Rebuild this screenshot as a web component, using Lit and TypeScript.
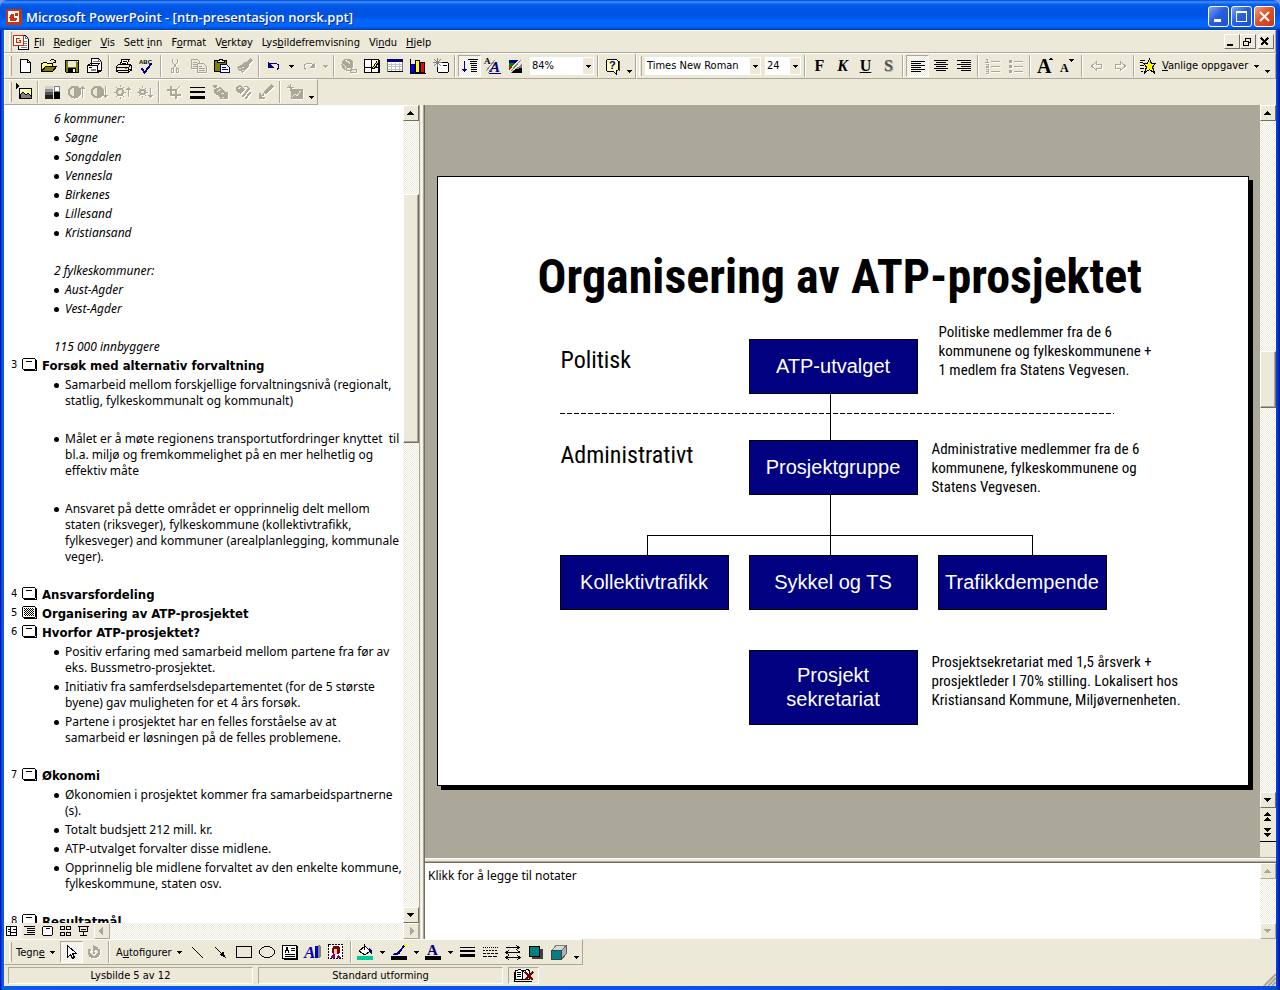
import { LitElement, html, svg, css, TemplateResult } from "lit";
import { customElement } from "lit/decorators.js";

const ink = (d: string, c = "#000", w = 1) =>
  svg`<path d=${d} fill="none" stroke=${c} stroke-width=${w} />`;
const fill = (d: string, c = "#000", s = "none") => svg`<path d=${d} fill=${c} stroke=${s} />`;
const G = "#aca899";

const icons: Record<string, unknown> = {
  newdoc: svg`${fill("M2.500 1.500h7l3 3v10h-10z", "#fff", "#000")}${ink("M9.500 1.500v3h3")}`,
  open: svg`${fill("M.5 13.500v-8h1l1-1h3l1 1h5v3", "#ffff80", "#000")}${fill("M.5 13.500l4-5h11l-4 5z", "#808000", "#000")}${ink("M9 2.500h1M10 1.500h3M13 2.500h1M12 4.500h3M14.500 2v3")}`,
  save: svg`${fill("M1.500 2.500h13v12h-12l-1-1z", "#808000", "#000")}${fill("M4 3h8v6h-8z", "#ece9d8")}${fill("M4 10h8v4h-8z")}${fill("M9 11h2v3h-2z", "#fff")}${fill("M13 3h1v1h-1z", "#fff")}`,
  mail: svg`${fill("M4.500 7v-6.500h7l3 3v9h-4", "#fff", "#000")}${ink("M6 3.500h5M6 5.500h7M11.500 .5v3h3", "#808080")}${fill("M.5 7.500h10v7h-10z", "#fff", "#000")}${ink("M.5 7.500l3-2h9l-2 2M10.500 14.500l4-2v-4")}${ink("M2 9.500h3", "#000")}${fill("M4 11h5v2h-5z", "#808080")}`,
  print: svg`${fill("M4.500 6l1.500-4.500h7l-2 5z", "#fff", "#000")}${ink("M7 3.500h4M6 5.500h4")}${fill("M.5 8.500l3-2.500h11l1 2v4l-3 2.500h-9.500l-2.500-1.500z", "#ece9d8", "#000")}${ink("M1 9.500h11M1 12.500h11M12.500 9v5M13 8.500l2-2M3 14.500h9")}${fill("M9 10h2v1h-2z", "#808000")}${ink("M13 11.500h2M13 13.500h1")}`,
  spell: svg`<text x="0" y="6" class="tiny">ABC</text>${ink("M2.500 10l3 4.500 7-9", "#000080", 2)}`,
  cut: svg`${ink("M4.500 1v3l5 7M9.500 1v3l-5 7", G)}${ink("M3.500 10.500h2v4h-2zM8.500 10.500h2v4h-2z", G)}`,
  copy: svg`${fill("M.5 1.500h6l2 2v7h-8z", "#ece9d8", G)}${ink("M2 4.500h4M2 6.500h4M2 8.500h4", G)}${fill("M6.500 5.500h6l3 3v6h-9z", "#ece9d8", G)}${ink("M8 8.500h3M8 10.500h6M8 12.500h6", G)}`,
  paste: svg`${fill("M.5 2.500h12v11h-12z", "#808000", "#000")}${fill("M3.500 3.500v-1h1.500l1-1.500h2l1 1.500h1.500v2h-7z", "#ece9d8", "#000")}${fill("M6.500 6.500h6l3 3v5h-9z", "#fff", "#000080")}${ink("M8 9.500h4M8 11.500h6", "#000080")}`,
  brush: svg`${ink("M14.500 1.500l-5 5", G, 3)}${fill("M8 4l4 4-2 3-5-5z", G)}${fill("M0 9l6-3 4 5-5 4-1-2-2 0z", G)}${ink("M2 10.500h2M5 9.500h2M5 12.500h2", "#ece9d8")}`,
  undo: svg`${ink("M4 6.500l2-1.500h4l2.500 2v3l-1.500 1.500", "#000080")}${fill("M2 4v6h6z", "#000080")}`,
  redo: svg`${ink("M12 6.500l-2-1.500h-4l-2.500 2v3l1.500 1.500", G)}${fill("M14 4v6h-6z", G)}`,
  link: svg`<circle cx="6.500" cy="6.500" r="6" fill=${G} />${ink("M4 2.500c3 1 4 1 5 3M2 6.500c2 1 3 1 3 4", "#ece9d8")}${fill("M5.500 9.500h5v3h-5zM9.500 11.500h6v3h-6z", "#ece9d8", G)}`,
  tabborder: svg`${fill("M.5 1.500h14v13h-14z", "#fff", "#000")}${ink("M7.500 2v12M1 9.500h13M.5 14.500h15M15 2v13")}${ink("M14 4l-5 7", "#000", 3)}${ink("M13.500 4l-4 6", "#ffff00")}`,
  table: svg`${fill("M0.500 1.500h15v12h-15z", "#fff", "#808080")}${fill("M0 1h16v3h-16z", "#000080")}${ink("M1 6.500h14M1 8.500h14M1 11.500h14M4.500 5v8M8.500 5v8M12.500 5v8", "#c0c0c0")}${ink("M.5 13.500h15")}`,
  chart: svg`${fill("M.5 6.500h4v8h-4z", "#0000ff", "#000080")}${fill("M5.500 2.500h4v12h-4z", "#ffff00", "#000")}${fill("M10.500 4.500h4v10h-4z", "#ff0000", "#000")}${ink("M0.500 1v14.500h15")}`,
  newslide: svg`${fill("M4.500 4.500h10l1 1v8l-1 1h-9l-1-1z", "#fff", "#000")}${ink("M10 7.500h4")}${ink("M4.500 0v9M0 4.500h9M1 1l7 7M8 1l-7 7", "#808080")}`,
  outline: svg`${ink("M2.500 3v10", "#000080")}${fill("M0 11h5l-2.500 3z", "#000080")}${ink("M6 1.500h10M8 3.500h7M8 5.500h7M9 7.500h6M9 9.500h6M9 11.500h6M9 13.500h6")}`,
  format: svg`<text x="-1" y="6" class="tinyserif">A</text>${ink("M1 13l9-11M3 15l9-11", "#808080")}<text x="5" y="14" class="bigA">A</text>${ink("M4 15.500h12", "#000080")}`,
  gray: svg`${fill("M1 2h9l-3 4h-6z", "#000080")}${fill("M1 5h6l-3 4h-3z", "#008000")}${fill("M1 9h3l-2 3h-1z", "#ff0000")}${ink("M13 2l-10 11", "#808080")}${fill("M14 6v9h-12z", "#808080")}${fill("M14 10v5h-11l4-4z")}`,
  help: svg`${fill("M2.500 1.500h9l1.500 1.500v9l-2 1v3l-3-3h-6l-1-1v-9z", "#ffffc0", "#000")}<text x="4" y="11" class="qm">?</text>${ink("M14.500 3v10", "#404040")}`,
  al: svg`${ink("M1 3.500h14M1 5.500h10M1 7.500h14M1 9.500h10M1 11.500h14M1 13.500h10")}`,
  ac: svg`${ink("M1 2.500h14M3 4.500h10M1 6.500h14M3 8.500h10M1 10.500h14M3 12.500h10")}`,
  ar: svg`${ink("M1 2.500h14M5 4.500h10M1 6.500h14M5 8.500h10M1 10.500h14M5 12.500h10")}`,
  num: svg`${ink("M6 3.500h9M6 8.500h9M6 13.500h9", G)}${ink("M1 1.500h1v3M0 4.500h4M1 6.500h2v2h-2v1h3M1 11.500h2v1.500h-2M3 13v2h-2", G)}`,
  bul: svg`${ink("M6 3.500h9M6 8.500h9M6 13.500h9", G)}${fill("M1 2h3v3h-3zM1 7h3v3h-3zM1 12h3v3h-3z", G)}`,
  bigger: svg`<text x="0" y="15" class="grow">A</text>${fill("M11 2h5l-2.500-2.500z")}`,
  smaller: svg`<text x="0" y="14" class="shrink">A</text>${fill("M8 1h6l-3 3z")}`,
  pl: svg`${ink("M2.500 8l5-4.500v2.500h5v4h-5v2.500z", G)}`,
  pr: svg`${ink("M13.500 8l-5-4.500v2.500h-5v4h5v2.500z", G)}`,
  star: svg`${ink("M0 2.500h5M0 4.500h3M0 7.500h4M0 10.500h4M1 13.500h2")}${fill("M9.500 1l2 4.500h4l-3 3.500 2 6-5-3.500-5 3.500 2-6-3-3.500h4z", "#ffff00", "#000")}`,
  picture: svg`${fill("M3.500 4.500h12v10h-12z", "#ffffc0", "#000")}${fill("M4 14v-3l3-3 3 3 2-2 3 3v2z", "#808080", "#000")}${fill("M12 6h2v2h-2z", "#ffff00")}${fill("M0 -1l4 3-4 3z")}`,
  imgctl: svg`${fill("M0 2h8v3h-8z", "#d0d0d0")}${fill("M0 5h8v3h-8z", "#909090")}${fill("M0 8h8v3h-8z", "#505050")}${fill("M0 11h8v4h-8z", "#202020")}${fill("M9.500 2.500h5v5h-5z", "#fff", "#808080")}${fill("M9 8h6v7h-6z")}`,
  con1: svg`<circle cx="6.500" cy="8" r="5.500" fill="#ece9d8" stroke=${G} stroke-width="2" />${fill("M6 3a5 5 0 0 1 0 10z", G)}${ink("M14.500 3v11M12 5.500l2.500-2.500 2 2", G)}`,
  con2: svg`<circle cx="6.500" cy="8" r="5.500" fill="#ece9d8" stroke=${G} stroke-width="2" />${fill("M6 3a5 5 0 0 1 0 10z", G)}${ink("M14.500 2v11M12 10.500l2.500 2.500 2-2", G)}`,
  bri1: svg`<circle cx="6" cy="8" r="3" fill="#ece9d8" stroke=${G} stroke-width="2" />${ink("M6.500 1v2M6.500 13v2M0 8.500h2M10 8.500h2M2 3l2 2M10 3l-2 2M2 13l2-2M10 13l-2-2M14.500 4v9M12.500 6l2-2 2 2", G)}`,
  bri2: svg`<circle cx="5.500" cy="8" r="2.500" fill="#ece9d8" stroke=${G} stroke-width="2" />${ink("M5.500 2v2M5.500 12v2M0 8.500h2M9 8.500h2M2 4l2 2M9 4l-2 2M2 12l2-2M9 12l-2-2M13.500 4v9M11.500 11l2 2 2-2", G)}`,
  crop: svg`${ink("M5 2v9h10M1 6h9v9", G, 2)}${ink("M14 2l-4 4", G)}`,
  lines: svg`${ink("M1 3.500h15")}${ink("M1 8h15", "#000", 2)}${ink("M1 13.500h15", "#000", 3)}`,
  recolor: svg`${fill("M1 1h4v3l3-1 5 4-5 6-6-4v-4z", G)}${ink("M2 5l4-2M5 8l4-3", "#ece9d8")}${fill("M8 8h8v7h-8z", G)}${ink("M9 9.500h3M10 13.500h2", "#ece9d8")}`,
  fmtpic: svg`${fill("M1 3l4-2 5 4-4 5-5-3z", G)}${ink("M3 5l3-2", "#ece9d8")}${ink("M14.500 4l-7 9M15.500 8l-5 7", G, 2)}${ink("M9 2.500h3l3 3", G)}`,
  transp: svg`${ink("M14.500 1.500l-8 8", G, 3)}${ink("M6 10l-5 4M2 9v5h5", G, 2)}`,
  reset: svg`${fill("M4 5h12v10h-12z", G)}${ink("M0 3.500h7M3.500 0v7M1 1l5 5", G)}${ink("M5 13l3-3 2 2 3-4M12 7.500h2", "#ece9d8")}`,
  cursor: svg`${fill("M4.500 1.500v12l3-3 2 4 2-1-2-4h4z", "#fff", "#000")}`,
  rotate: svg`${ink("M4 5a5 5 0 1 0 8 0", G, 3)}<circle cx="8" cy="9" r="1.500" fill=${G} />${fill("M7 1l6 3-6 4z", G)}`,
  line: svg`${ink("M2 3l11 11")}`,
  arrow: svg`${ink("M2 3l7 7")}${fill("M13 14l-6-3 3-4z")}`,
  rect: svg`${fill("M.5 2.500h15v11h-15z", "none", "#000")}`,
  oval: svg`<ellipse cx="8" cy="8" rx="7.500" ry="5.500" fill="none" stroke="#000" />`,
  textbox: svg`${fill("M.5 1.500h14v13h-14z", "#fff", "#000")}${ink("M15.500 2v13.500h-14")}${ink("M3 8.500l2-5 2 5M4 6.500h3M9 4.500h4M9 6.500h4M3 10.500h10M3 12.500h10")}`,
  wordart: svg`${fill("M13 1l3 1v11l-3 1z", "#808080")}<text x="-1" y="14" class="wa">A</text>${fill("M10 2h3v12h-3z", "#0000c0")}`,
  clip: svg`${fill("M.5 .5h14v14h-14z", "#fff")}<rect x=".5" y=".5" width="14" height="14" fill="none" stroke="#000" stroke-dasharray="2 1" />${fill("M5 2h5l2 2v5l-2 1h-5l-1-3z", "#800000")}${fill("M6 5h3v4l-2 2-1-1z", "#ffc0a0")}${fill("M3 12l3-2 2 2 3-1 2 3h-10z", "#800080")}${fill("M7 11h2v3h-2z", "#fff")}`,
  fillc: svg`${fill("M0 12h16v4h-16z", "#00cc99")}${fill("M2 7l6-5 5 5-5 4z", "#fff", "#000")}${ink("M7.500 6v-6")}${fill("M12 4l3 3v4l-2-3z", "#000080")}`,
  linec: svg`${fill("M0 12h16v4h-16z")}${ink("M14 1l-6 7", "#000080", 2)}${fill("M13 0h3v2h-3z", "#ffff00")}${fill("M1 11l3-2 4-1 2 1-4 2z", "#000080")}`,
  fontc: svg`${fill("M0 12h16v4h-16z")}<text x="2" y="11" class="fa">A</text>`,
  weights: svg`${ink("M1 3.500h15")}${ink("M1 7h15", "#000", 2)}${ink("M1 11.500h15", "#000", 3)}`,
  dashes: svg`<path d="M1 3.500h15" stroke="#000" stroke-dasharray="1 1" /><path d="M1 6.500h15" stroke="#000" stroke-dasharray="2 1" /><path d="M1 9.500h15" stroke="#000" stroke-dasharray="3 1" /><path d="M1 12.500h15" stroke="#000" stroke-dasharray="4 1" />`,
  arrows: svg`${ink("M1 3.500h13M1 8.500h14M2 13.500h13M11 1l3 2.500-3 2.500M4 6l-3 2.500 3 2.500M12 6l3 2.500M4 11l-3 2.500 3 2.500M12 11l3 2.500-3 2.500")}`,
  shadow: svg`${fill("M4 5h11v10h-11z", "#404040")}${fill("M1.500 2.500h10v10h-10z", "#008080", "#000")}`,
  cube: svg`${fill("M.5 6.500l5-5.500h10l-5 5.500z", "#d8d8d8", "#808080")}${fill("M10.500 6.500l5-5v8l-5 6z", "#b0b0b0", "#606060")}${fill("M.5 6.500h10v9h-10z", "#008080", "#404040")}`,
  pp: svg`${fill("M0 0h16v16h-16z", "#c8340c")}${fill("M2.500 2.500h10v10h-10z", "#fff", "#fff")}${fill("M7.500 4.500a4 4 0 1 0 4 4h-4z", "#c8340c")}${fill("M9 3.500h3v3h-3z", "#c8340c")}`,
  ppdoc: svg`${fill("M5.500 1.500h7l3 3v11h-10z", "#fff", "#000")}${ink("M12.500 1.500v3h3M11 7.500h3M11 9.500h3M11 11.500h3M8 13.500h6", "#808080")}${fill("M0.500 1.500h10v10h-10z", "#fff", "#e02000")}${ink("M7 4.500h-3.500v4h4v-2h-2", "#e02000")}`,
  vnormal: svg`${fill("M.5 2.500h10v9h-10z", "#fff", "#000")}${ink("M4.500 3v9M5 8.500h6M2 5.500h2M2 7.500h2M7 5.500h3")}`,
  voutline: svg`${ink("M0 2.500h11M3 4.500h8M3 6.500h8M3 8.500h8M0 10.500h11")}`,
  vslide: svg`${fill("M1.500 2.500h8l1 1v7l-1 1h-8l-1-1v-7z", "#fff", "#000")}${ink("M4 4.500h4")}`,
  vsorter: svg`${ink("M.5 2.500h4v3h-4zM6.500 2.500h4v3h-4zM.5 8.500h4v3h-4zM6.500 8.500h4v3h-4z")}`,
  vshow: svg`${ink("M0 2.500h11M1.500 3v4.500h8v-4.500M5.500 8v3M2 11.500h7M3 5.500h5")}`,
  book: svg`${fill("M1.500 3l4-1.500 4 1.500 4-1.500 2 1v9h-14z", "#fff", "#000")}${ink("M8.500 3v9M3 4.500h4M3 6.500h4M3 8.500h4M0 4v9.500h18")}${ink("M11 4l8 8M19 4l-8 8", "#800000", 2)}`,
};

const icon = (n: string, w = 16) => html`<svg class="ic" width=${w} height="16" viewBox="0 0 ${w} 16" aria-hidden="true">${icons[n]}</svg>`;
const down = html`<svg class="tri" width="5" height="3" viewBox="0 0 5 3" aria-hidden="true"><path d="M0 0h5v1h-1v1h-1v1h-1v-1h-1v-1h-1z" fill="currentColor" /></svg>`;
const sbArrow = (d: string) => html`<svg class="tri" width="8" height="8" viewBox="0 0 8 8" aria-hidden="true"><path d=${d} fill="currentColor" /></svg>`;
const UP = "M3 2h1v1h1v1h1v1h1v1h-7v-1h1v-1h1v-1h1z";
const DN = "M0 2h7v1h-1v1h-1v1h-1v1h-1v-1h-1v-1h-1v-1h-1z";
const LT = "M5 0v8h-1v-1h-1v-1h-1v-1h-1v-2h1v-1h1v-1h1v-1z";
const RT = "M3 0v8h1v-1h1v-1h1v-1h1v-2h-1v-1h-1v-1h-1v-1z";

const btn = (n: string, label: string, cls = "") =>
  html`<button class="tb ${cls}" aria-label=${label}>${icon(n)}</button>`;
const off = (n: string, label: string) => btn(n, label, "off");
const drop = (label: string, cls = "") => html`<button class="dd ${cls}" aria-label=${label}>${down}</button>`;
const sep = html`<i class="sep"></i>`;
const grip = html`<i class="grip"></i>`;
const more = html`<button class="more" aria-label="Flere knapper">${down}</button>`;
const combo = (label: string, value: string, cls: string) => html`<label class="combo ${cls}"><select aria-label=${label}><option>${value}</option></select><i>${down}</i></label>`;

type Row = { t: string; n?: number; text?: string[]; on?: boolean };
const outline: Row[] = [
  { t: "em", text: ["6 kommuner:"] },
  ...["Søgne", "Songdalen", "Vennesla", "Birkenes", "Lillesand", "Kristiansand"].map((x) => ({ t: "eb", text: [x] })),
  { t: "gap" },
  { t: "em", text: ["2 fylkeskommuner:"] },
  { t: "eb", text: ["Aust-Agder"] },
  { t: "eb", text: ["Vest-Agder"] },
  { t: "gap" },
  { t: "em", text: ["115 000 innbyggere"] },
  { t: "h", n: 3, text: ["Forsøk med alternativ forvaltning"] },
  { t: "b", text: ["Samarbeid mellom forskjellige forvaltningsnivå (regionalt,", "statlig, fylkeskommunalt og kommunalt)"] },
  { t: "gap" },
  { t: "b", text: ["Målet er å møte regionens transportutfordringer knyttet  til", "bl.a. miljø og fremkommelighet på en mer helhetlig og", "effektiv måte"] },
  { t: "gap" },
  { t: "b", text: ["Ansvaret på dette området er opprinnelig delt mellom", "staten (riksveger), fylkeskommune (kollektivtrafikk,", "fylkesveger) and kommuner (arealplanlegging, kommunale", "veger)."] },
  { t: "gap" },
  { t: "h", n: 4, text: ["Ansvarsfordeling"] },
  { t: "h", n: 5, text: ["Organisering av ATP-prosjektet"], on: true },
  { t: "h", n: 6, text: ["Hvorfor ATP-prosjektet?"] },
  { t: "b", text: ["Positiv erfaring med samarbeid mellom partene fra før av", "eks. Bussmetro-prosjektet."] },
  { t: "b", text: ["Initiativ fra samferdselsdepartementet (for de 5 største", "byene) gav muligheten for et 4 års forsøk."] },
  { t: "b", text: ["Partene i prosjektet har en felles forståelse av at", "samarbeid er løsningen på de felles problemene."] },
  { t: "gap" },
  { t: "h", n: 7, text: ["Økonomi"] },
  { t: "b", text: ["Økonomien i prosjektet kommer fra samarbeidspartnerne", "(s)."] },
  { t: "b", text: ["Totalt budsjett 212 mill. kr."] },
  { t: "b", text: ["ATP-utvalget forvalter disse midlene."] },
  { t: "b", text: ["Opprinnelig ble midlene forvaltet av den enkelte kommune,", "fylkeskommune, staten osv."] },
  { t: "gap" },
  { t: "h", n: 8, text: ["Resultatmål"] },
];

const menus: [string, string, string][] = [
  ["", "F", "il"], ["", "R", "ediger"], ["", "V", "is"], ["Sett ", "i", "nn"], ["F", "o", "rmat"],
  ["V", "e", "rktøy"], ["Lys", "b", "ildefremvisning"], ["Vi", "n", "du"], ["", "H", "jelp"],
];

@customElement("app-root")
export class AppRoot extends LitElement {
  static styles = css`
    * { box-sizing: border-box; }
    :host {
      --face: #ece9d8; --shade: #aca899; --dark: #716f64;
      --dither: conic-gradient(#fff 25%, var(--face) 0 50%, #fff 0 75%, var(--face) 0) 0 0 / 2px 2px;
      display: flex; flex-direction: column; height: 100vh; overflow: hidden;
      font: 11px/14px "DejaVu Sans Condensed", "DejaVu Sans", sans-serif; color: #000;
      background: #7b96dc;
    }
    button { font: inherit; color: inherit; border: 0; background: none; padding: 0; margin: 0; display: flex; align-items: center; justify-content: center; flex: none; }
    svg { display: block; flex: none; }
    .ic { shape-rendering: crispEdges; overflow: visible; }
    .tiny { font: bold 6px "Liberation Sans", sans-serif; }
    .tinyserif { font: bold 9px "Liberation Serif", serif; }
    .bigA { font: italic bold 15px "Liberation Serif", serif; fill: #000080; }
    .qm { font: bold 11px "Liberation Sans", sans-serif; fill: #000080; }
    .grow { font: bold 20px "Liberation Serif", serif; }
    .shrink { font: bold 12px "Liberation Serif", serif; }
    .wa { font: italic bold 17px "Liberation Serif", serif; fill: #0000c0; }
    .fa { font: bold 15px "Liberation Serif", serif; fill: #000080; }

    .title {
      height: 30px; flex: none; display: flex; align-items: center; padding: 3px 5px 0 6px; gap: 2px;
      border-radius: 7px 7px 0 0;
      background: linear-gradient(#0a3fd6 0, #3d95ff 2px, #0a62ee 4px, #0054e3 8px, #0055e5 16px, #0066ff 22px, #0066ff 26px, #0049c8 29px, #0037a8 30px);
    }
    .title h1 { margin: 0; flex: 1; padding-left: 2px; color: #fff; font: 600 13px/18px "Open Sans", sans-serif; text-shadow: 1px 1px 0 #0a2a8a; white-space: nowrap; }
    .win { width: 21px; height: 21px; border: 1px solid #fff; border-radius: 3px; background: linear-gradient(135deg, #7fa4f8, #2a5fe0 45%, #1f4fd0); }
    .win.close { background: linear-gradient(135deg, #f0a184, #e0502c 45%, #c83a14); }

    .frame {
      flex: 1; min-height: 0; display: flex; flex-direction: column; padding: 0 4px 4px;
      background: linear-gradient(90deg, #0019c4 0 1px, #0a5be8 2px 4px, #0a48e0 calc(100% - 4px), #0030c8 calc(100% - 2px), #00138c 100%);
    }
    .inner { flex: 1; min-height: 0; display: flex; flex-direction: column; background: var(--face); }
    .bar { display: flex; flex: none; }
    .band { display: flex; align-items: center; height: 26px; padding: 0 0 0 4px; border: 1px solid var(--shade); border-top-color: #fff; border-left-color: #fff; }
    .band.menu { height: 23px; flex: 1; }
    .band.fmt { flex: 1; padding-left: 2px; }
    .grip { width: 3px; height: 20px; margin-right: 2px; border-right: 1px solid var(--shade); border-left: 1px solid #fff; flex: none; }
    .tight .grip { margin-right: 0; }
    .menu .item { height: 18px; padding: 2px 5px 0 4px; }
    .menu .ic { margin: 0 1px 0 -1px; }
    u { text-underline-offset: 1px; text-decoration-thickness: 1px; }
    .mdi { display: flex; margin-left: auto; margin-right: 1px; }
    .mdi button { width: 16px; height: 15px; border: 1px solid; border-color: #fff var(--dark) var(--dark) #fff; }
    .mdi button:last-child { margin-left: 2px; }
    .tb { width: 23px; height: 22px; }
    .tb.on { background: var(--dither); border: 1px solid; border-color: var(--shade) #fff #fff var(--shade); }
    .off { filter: drop-shadow(1px 1px 0 #fff); color: var(--shade); }
    .dd { width: 12px; height: 22px; }
    .dd.off, .tight .dd { width: 11px; }
    .sep { width: 6px; height: 22px; flex: none; background: linear-gradient(90deg, transparent 2px, var(--shade) 2px 3px, #fff 3px 4px, transparent 4px); }
    .more { width: 11px; height: 22px; align-items: flex-end; padding-bottom: 4px; }
    .ch { font: bold 16px/20px "Liberation Serif", serif; }
    .ch.it { font-style: italic; }
    .ch.ul { text-decoration: underline; }
    .ch.sh { color: #505050; text-shadow: 1px 1px 0 #b0b0b0; }
    .combo { position: relative; display: flex; height: 18px; background: #fff; flex: none; }
    .combo select { appearance: none; border: 0; background: none; width: 100%; margin: 0; padding: 0 12px 1px 2px; font: inherit; color: inherit; }
    .combo i { position: absolute; right: 1px; top: 1px; width: 10px; height: 16px; background: var(--face); display: flex; align-items: center; justify-content: center; pointer-events: none; }
    .zoom { width: 64px; margin: 0 1px 0 3px; }
    .face { width: 116px; margin: 0 4px 0 1px; }
    .size { width: 36px; margin-right: 1px; }
    .wide { gap: 5px; padding: 1px 5px 0 4px; height: 22px; }
    .fmt .wide { gap: 6px; padding: 0 3px; }

    .work { flex: 1; min-height: 0; display: grid; grid-template-columns: 415px 6px 1fr; }
    .left { display: flex; flex-direction: column; min-height: 0; min-width: 0; }
    .pane { flex: 1; min-height: 0; display: flex; background: #fff; }
    .outline { flex: 1; min-width: 0; overflow: hidden; margin: 0; padding: 3px 0 0; list-style: none; font: 12px/16px "Noto Sans", sans-serif; white-space: pre; }
    .outline li { display: grid; grid-template-columns: 50px 11px 1fr; padding-top: 3px; min-height: 19px; }
    .outline li.h { grid-template-columns: 18px 20px 1fr; font: bold 13px/16px "DejaVu Sans Condensed", "DejaVu Sans", sans-serif; }
    .outline li.em, .outline li.eb { font-style: italic; }
    .em span { grid-column: 2 / 4; }
    .dot::before { content: ""; display: block; width: 5px; height: 5px; margin: 6px 0 0; border-radius: 50%; background: #000; }
    .outline .num { font-size: 11px; font-weight: normal; line-height: 14px; padding-left: 7px; }
    .vsb { width: 16px; flex: none; display: flex; flex-direction: column; background: var(--dither); }
    .key { width: 16px; height: 16px; background: var(--face); border: 1px solid; border-color: #fff var(--dark) var(--dark) #fff; }
    .key.dim { color: var(--shade); border-color: #fff var(--shade) var(--shade) #fff; }
    .thumb { background: var(--face); border: 1px solid; border-color: #fff var(--dark) var(--dark) #fff; box-shadow: inset -1px -1px 0 var(--shade); }
    .views { height: 16px; flex: none; display: flex; background: var(--dither); }
    .views .v { width: 18px; height: 16px; padding-right: 2px; background: var(--face); }
    .views .v.on { background: var(--dither); }
    .views .key:last-child { margin-left: auto; }
    .split { background: linear-gradient(90deg, var(--shade) 1px, var(--face) 1px 2px, #fff 2px 3px, var(--face) 3px 4px, var(--shade) 4px 5px, var(--dark) 5px); }
    .right { display: flex; flex-direction: column; min-height: 0; min-width: 0; }
    .stage { flex: 1; min-width: 0; display: flex; align-items: center; justify-content: center; padding-bottom: 1px; background: var(--shade); overflow: hidden; }
    .slide { position: relative; flex: none; width: 812px; height: 610px; background: #fff; border: 1px solid #000; box-shadow: 4px 4px 0 #000; font-family: "Arial Narrow", "Liberation Sans Narrow", "Roboto Condensed", "Liberation Sans", sans-serif; }
    .slide > * { position: absolute; margin: 0; white-space: pre; }
    .slide h2 { font-size: 48px; line-height: 58px; font-weight: bold; }
    .cap { font-size: 24px; line-height: 32px; }
    .note { font-size: 15px; line-height: 19px; }
    .node { width: 169px; display: flex; align-items: center; justify-content: center; text-align: center; background: #000080; border: 1px solid #000; color: #fff; font: 20px/24px "Liberation Sans", sans-serif; }
    .hsplit { height: 6px; flex: none; background: linear-gradient(var(--shade) 1px, #fff 1px 2px, var(--face) 2px 4px, var(--shade) 4px 5px, var(--dark) 5px); }
    .jump { background: var(--face); width: 16px; }
    .jump button { width: 16px; height: 17px; }
    .jump button:last-of-type { border-bottom: 1px solid #000; }
    .jump i { display: block; height: 15px; }
    .notes { height: 76px; flex: none; display: flex; background: #fff; }
    .notes textarea { flex: 1; min-width: 0; border: 0; resize: none; overflow: hidden; padding: 5px 3px; outline: 0; font: 12px/16px "Noto Sans", sans-serif; color: #000; background: #fff; }

    .status { height: 21px; flex: none; display: flex; align-items: center; gap: 5px; padding: 0 0 0 4px; }
    .cell { height: 17px; width: 245px; padding-top: 1px; border: 1px solid; border-color: var(--shade) #fff #fff var(--shade); display: flex; align-items: center; justify-content: center; }
    .cell.book { width: 31px; padding: 0; }
    .size-grip { margin-left: auto; align-self: flex-end; }
  `;

  private row(r: Row): TemplateResult {
    const body = r.text ? html`<span>${r.text.map((l, i) => (i ? html`<br>${l}` : l))}</span>` : "";
    if (r.t === "h")
      return html`<li class="h"><span class="num">${r.n}</span><svg class="ic" width="16" height="16" viewBox="0 1 16 16" aria-hidden="true">
        <path d="M1.500 1.500h11l1 1v9l-1 1h-11l-1-1v-9z" fill="#fff" stroke="#000" /><path d="M2 13.500h12.500v-11" fill="none" stroke="#000" />
        ${r.on ? svg`<path d="M2 3.500h10M2 5.500h10M2 7.500h10M2 9.500h10" stroke="#000" stroke-dasharray="1 1" /><path d="M3 4.500h9M3 6.500h9M3 8.500h9M3 10.500h9" stroke="#000" stroke-dasharray="1 1" />` : svg`<path d="M4 4.500h6" stroke="#000" />`}
      </svg>${body}</li>`;
    if (r.t === "gap") return html`<li></li>`;
    if (r.t === "em") return html`<li class="em"><i></i>${body}</li>`;
    return html`<li class=${r.t}><i></i><i class="dot"></i>${body}</li>`;
  }

  render() {
    return html`
      <header class="title">
        ${icon("pp")}
        <h1>Microsoft PowerPoint - [ntn-presentasjon norsk.ppt]</h1>
        <button class="win" aria-label="Minimer"><svg class="ic" width="13" height="13"><path d="M2 9h7v3h-7z" fill="#fff" /></svg></button>
        <button class="win" aria-label="Maksimer"><svg class="ic" width="13" height="13"><path d="M1.500 2.500h10v9h-10zM1 2.500h11M1 1.500h11" fill="none" stroke="#fff" /></svg></button>
        <button class="win close" aria-label="Lukk"><svg width="13" height="13"><path d="M2 2l9 9M11 2l-9 9" stroke="#fff" stroke-width="2" /></svg></button>
      </header>
      <div class="frame"><div class="inner">
        <nav class="bar"><div class="band menu">${grip}${icon("ppdoc")}
          ${menus.map(([a, k, b]) => html`<button class="item"><span>${a}<u>${k}</u>${b}</span></button>`)}
          <div class="mdi">
            <button aria-label="Minimer vindu"><svg class="ic" width="10" height="9"><path d="M1 7h6v2h-6z" /></svg></button>
            <button aria-label="Gjenopprett vindu"><svg class="ic" width="10" height="9"><path d="M3 1h6M3.500 1v3M8.500 1v5M7 5.500h2M1 4h6M1.500 4v4.500h5v-4.500" fill="none" stroke="#000" /></svg></button>
            <button aria-label="Lukk vindu"><svg class="ic" width="10" height="9"><path d="M1 1l7 7M8 1l-7 7" stroke="#000" stroke-width="2" /></svg></button>
          </div>
        </div></nav>
        <div class="bar">
          <div class="band">${grip}
            ${btn("newdoc", "Ny")}${btn("open", "Åpne")}${btn("save", "Lagre")}${btn("mail", "E-post")}${sep}
            ${btn("print", "Skriv ut")}${btn("spell", "Stavekontroll")}${sep}
            ${off("cut", "Klipp ut")}${off("copy", "Kopier")}${btn("paste", "Lim inn")}${off("brush", "Kopier format")}${sep}
            ${btn("undo", "Angre")}${drop("Angreliste")}${off("redo", "Gjør om")}${drop("Gjør om-liste", "off")}${sep}
            ${off("link", "Hyperkobling")}${btn("tabborder", "Tabeller og kantlinjer")}${btn("table", "Sett inn tabell")}${btn("chart", "Sett inn diagram")}${btn("newslide", "Nytt lysbilde")}${sep}
            ${btn("outline", "Vis alle", "on")}${btn("format", "Vis formatering")}${btn("gray", "Gråskala")}
            ${combo("Zoom", "84%", "zoom")}${sep}${btn("help", "Hjelp")}${more}
          </div>
          <div class="band fmt">${grip}
            ${combo("Skrift", "Times New Roman", "face")}${combo("Skriftstørrelse", "24", "size")}${sep}
            <button class="tb ch">F</button><button class="tb ch it">K</button><button class="tb ch ul">U</button><button class="tb ch sh">S</button>${sep}
            ${btn("al", "Venstrejuster", "on")}${btn("ac", "Midtstill")}${btn("ar", "Høyrejuster")}${sep}
            ${off("num", "Nummerering")}${off("bul", "Punktmerking")}${sep}
            ${btn("bigger", "Øk skrift")}${btn("smaller", "Reduser skrift")}${sep}
            ${off("pl", "Hev nivå")}${off("pr", "Senk nivå")}${sep}
            <button class="wide">${icon("star")}<span><u>V</u>anlige oppgaver</span>${down}</button>${more}
          </div>
        </div>
        <div class="bar"><div class="band tight">${grip}
          ${btn("picture", "Sett inn bilde")}${sep}${btn("imgctl", "Bildekontroll")}${off("con1", "Mer kontrast")}${off("con2", "Mindre kontrast")}${off("bri1", "Mer lysstyrke")}${off("bri2", "Mindre lysstyrke")}${sep}
          ${off("crop", "Beskjær")}${btn("lines", "Linjestil")}${off("recolor", "Fargelegg bilde")}${off("fmtpic", "Formater bilde")}${off("transp", "Gjennomsiktig farge")}${sep}${off("reset", "Tilbakestill bilde")}${more}
        </div></div>

        <main class="work">
          <section class="left">
            <div class="pane">
              <ul class="outline">${outline.map((r) => this.row(r))}</ul>
              <div class="vsb">
                <button class="key" aria-label="Rull opp">${sbArrow(UP)}</button>
                <div style="flex-grow:73"></div><div class="thumb" style="flex-grow:248"></div><div style="flex-grow:466"></div>
                <button class="key" aria-label="Rull ned">${sbArrow(DN)}</button>
              </div>
            </div>
            <div class="views">
              ${[["vnormal", "Normalvisning"], ["voutline", "Disposisjon"], ["vslide", "Lysbilde"], ["vsorter", "Sortering"], ["vshow", "Fremvisning"]].map(
                ([n, l], i) => html`<button class="v ${i ? "" : "on"}" aria-label=${l}><svg class="ic" width="12" height="14" viewBox="0 0 12 14">${icons[n]}</svg></button>`)}
              <button class="key dim" aria-label="Rull venstre">${sbArrow(LT)}</button>
              <button class="key dim" aria-label="Rull høyre">${sbArrow(RT)}</button>
            </div>
          </section>
          <div class="split"></div>
          <section class="right">
            <div class="pane">
              <div class="stage"><article class="slide">
                <svg width="810" height="608" style="left:0;top:0" class="ic" aria-hidden="true">
                  <path d="M122 236.500h554" stroke="#000" stroke-dasharray="5 2" />
                  <path d="M392.500 216v48M392.500 317v62M209.500 379v-20.500h385v20.500" fill="none" stroke="#000" />
                </svg>
                <h2 style="left:100px;top:71px">Organisering av ATP-prosjektet</h2>
                <div class="cap" style="left:123px;top:167px">Politisk</div>
                <div class="cap" style="left:123px;top:262px">Administrativt</div>
                <div class="node" style="left:311px;top:162px;height:55px">ATP-utvalget</div>
                <div class="node" style="left:311px;top:263px;height:55px">Prosjektgruppe</div>
                <div class="node" style="left:122px;top:378px;height:55px">Kollektivtrafikk</div>
                <div class="node" style="left:311px;top:378px;height:55px">Sykkel og TS</div>
                <div class="node" style="left:500px;top:378px;height:55px">Trafikkdempende</div>
                <div class="node" style="left:311px;top:473px;height:75px">Prosjekt<br>sekretariat</div>
                <p class="note" style="left:501px;top:146px">Politiske medlemmer fra de 6<br>kommunene og fylkeskommunene +<br>1 medlem fra Statens Vegvesen.</p>
                <p class="note" style="left:494px;top:263px">Administrative medlemmer fra de 6<br>kommunene, fylkeskommunene og<br>Statens Vegvesen.</p>
                <p class="note" style="left:494px;top:476px">Prosjektsekretariat med 1,5 årsverk +<br>prosjektleder I 70% stilling. Lokalisert hos<br>Kristiansand Kommune, Miljøvernenheten.</p>
              </article></div>
              <div class="vsb">
                <button class="key" aria-label="Rull opp">${sbArrow(UP)}</button>
                <div style="flex-grow:231"></div><div class="thumb" style="flex-grow:55"></div><div style="flex-grow:385"></div>
                <button class="key" aria-label="Rull ned">${sbArrow(DN)}</button>
                <div class="jump">
                  <button aria-label="Forrige lysbilde"><svg class="ic" width="8" height="10"><path d="M0 4h7l-3-4h-1zM0 9h7l-3-4h-1z" /></svg></button>
                  <button aria-label="Neste lysbilde"><svg class="ic" width="8" height="10"><path d="M0 0h7l-3 4h-1zM0 5h7l-3 4h-1z" /></svg></button>
                  <i></i>
                </div>
              </div>
            </div>
            <div class="hsplit"></div>
            <div class="notes">
              <textarea aria-label="Notater" .value=${"Klikk for å legge til notater"}></textarea>
              <div class="vsb">
                <button class="key dim" aria-label="Rull notater opp">${sbArrow(UP)}</button><div style="flex-grow:1"></div>
                <button class="key dim" aria-label="Rull notater ned">${sbArrow(DN)}</button>
              </div>
            </div>
          </section>
        </main>

        <div class="bar"><div class="band tight">${grip}
          <button class="wide"><span>Tegn<u>e</u></span>${down}</button>
          ${btn("cursor", "Merk objekter", "on")}${off("rotate", "Roter fritt")}${sep}
          <button class="wide"><span>A<u>u</u>tofigurer</span>${down}</button>
          ${btn("line", "Linje")}${btn("arrow", "Pil")}${btn("rect", "Rektangel")}${btn("oval", "Ellipse")}${btn("textbox", "Tekstboks")}${btn("wordart", "WordArt")}${btn("clip", "Utklipp")}${sep}
          ${btn("fillc", "Fyllfarge")}${drop("Fyllfarger")}${btn("linec", "Linjefarge")}${drop("Linjefarger")}${btn("fontc", "Skriftfarge")}${drop("Skriftfarger")}
          ${btn("weights", "Linjestil")}${btn("dashes", "Stiplet stil")}${btn("arrows", "Pilstil")}${btn("shadow", "Skygge")}${btn("cube", "3D")}${more}
        </div></div>
        <footer class="status">
          <div class="cell">Lysbilde 5 av 12</div><div class="cell">Standard utforming</div>
          <div class="cell book">${icon("book", 20)}</div>
          <svg class="size-grip" width="13" height="13" aria-hidden="true"><path d="M1 13l12-12M5 13l8-8M9 13l4-4" stroke="#aca899" stroke-width="2" /></svg>
        </footer>
      </div></div>`;
  }
}
